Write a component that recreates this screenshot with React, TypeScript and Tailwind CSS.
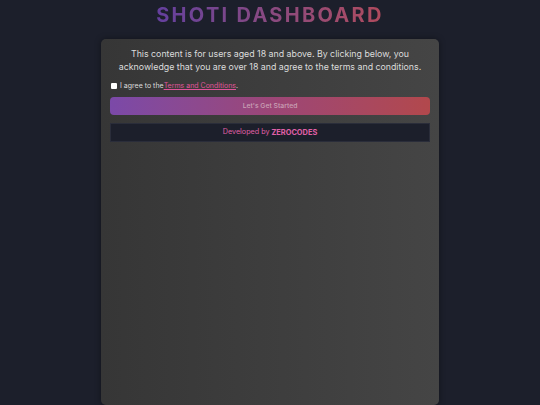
export default function App() {
  return (
    <div
      className="w-[540px] h-[405px] overflow-hidden bg-[#1c1f2b] flex flex-col items-center"
      style={{ fontFamily: "Inter, 'Noto Sans', sans-serif" }}
    >
      <h1 className="mt-[4px] h-[23px] text-[20px] leading-[23px] font-bold tracking-[2.3px] bg-gradient-to-r from-[#643f9e] to-[#b04a5c] bg-clip-text text-transparent">
        SHOTI DASHBOARD
      </h1>
      <div className="mt-[12px] w-[338px] h-[367px] rounded-[5px] bg-gradient-to-r from-[#363636] to-[#454545] shadow-[0_0_6px_rgba(0,0,0,0.4)] px-[9px] pt-[8px]">
        <p className="text-center text-[#dcdcdc] text-[8.8px] leading-[13px]">
          This content is for users aged 18 and above. By clicking below, you acknowledge that you are over 18 and agree to the terms and conditions.
        </p>
        <div className="mt-[8px] flex items-center h-[10px]">
          <span className="w-[6px] h-[6px] bg-white rounded-[1px] ml-[1px]" />
          <span className="ml-[3px] text-[7px] text-[#dcdcdc]">I agree to the</span>
          <span className="text-[7px] text-[#e0559a] underline">Terms and Conditions</span>
          <span className="text-[7px] text-[#dcdcdc]">.</span>
        </div>
        <div className="mt-[6px] h-[18px] rounded-[4px] bg-gradient-to-r from-[#7b49a8] via-[#9c4677] to-[#b2484c] flex items-center justify-center">
          <span className="text-[6.8px] font-medium text-[#caa2b6]">Let's Get Started</span>
        </div>
        <div className="mt-[8px] h-[19px] bg-[#1c1f2b] border border-[#2a2d3a] flex items-center justify-center">
          <span className="text-[7.2px] text-[#e060a8]">Developed by </span>
          <span className="ml-[2px] text-[7.4px] font-bold text-[#e060a8]">ZEROCODES</span>
        </div>
      </div>
    </div>
  );
}
